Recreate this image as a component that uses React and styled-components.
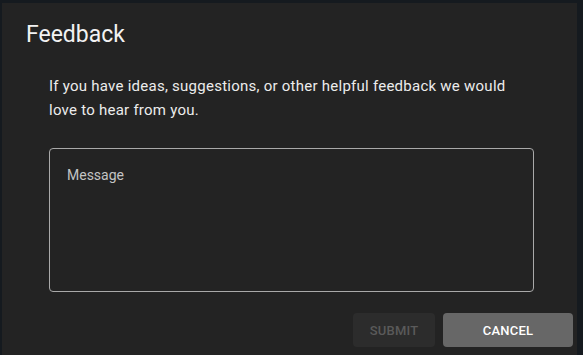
import React from "react";
import styled, { createGlobalStyle } from "styled-components";

const Global = createGlobalStyle`
  html, body { margin: 0; padding: 0; background: #151a1f; height: 100%; }
  #root { height: 100%; }
  * { box-sizing: border-box; }
`;

const Page = styled.div`
  width: 583px;
  height: 355px;
  overflow: hidden;
  padding: 3px 6px 0 2px;
  background: #151a1f;
`;

const Dialog = styled.div`
  height: 360px;
  background: #232323;
  display: flex;
  flex-direction: column;
  font-family: Roboto, "Liberation Sans", sans-serif;
`;

const Title = styled.h2`
  margin: 0;
  padding: 18px 24px 0;
  font-size: 23px;
  font-weight: 400;
  line-height: 28px;
  color: #f2f2f2;
`;

const Content = styled.div`
  padding: 25px 43px 0 47px;
  display: flex;
  flex-direction: column;
`;

const Text = styled.p`
  margin: 0;
  max-width: 470px;
  font-size: 15px;
  line-height: 24px;
  color: #ececec;
  letter-spacing: 0.25px;
`;

const Field = styled.textarea`
  margin-top: 26px;
  height: 144px;
  width: 100%;
  resize: none;
  background: transparent;
  border: 1px solid #a9a9a9;
  border-radius: 4px;
  padding: 16px 17px;
  font-family: Roboto, "Liberation Sans", sans-serif;
  font-size: 14px;
  line-height: 20px;
  color: #eee;
  outline: none;
  &::placeholder { color: #c4c4c4; }
`;

const Actions = styled.div`
  display: flex;
  justify-content: flex-end;
  gap: 8px;
  padding: 21px 4px 0 0;
`;

const Button = styled.button`
  height: 34px;
  width: ${(p) => p.$w}px;
  border: none;
  border-radius: 4px;
  font-family: Roboto, "Liberation Sans", sans-serif;
  font-size: 13px;
  font-weight: 500;
  letter-spacing: 0.2px;
  text-transform: uppercase;
  background: ${(p) => (p.$primary ? "#676767" : "#2c2c2c")};
  color: ${(p) => (p.$primary ? "#ffffff" : "#5a5a5a")};
  cursor: ${(p) => (p.disabled ? "default" : "pointer")};
`;

export default function App() {
  return (
    <>
      <Global />
      <Page>
        <Dialog>
          <Title>Feedback</Title>
          <Content>
            <Text>
              If you have ideas, suggestions, or other helpful feedback we would love to hear from you.
            </Text>
            <Field placeholder="Message" />
          </Content>
          <Actions>
            <Button $w={82} disabled>Submit</Button>
            <Button $w={130} $primary>Cancel</Button>
          </Actions>
        </Dialog>
      </Page>
    </>
  );
}
